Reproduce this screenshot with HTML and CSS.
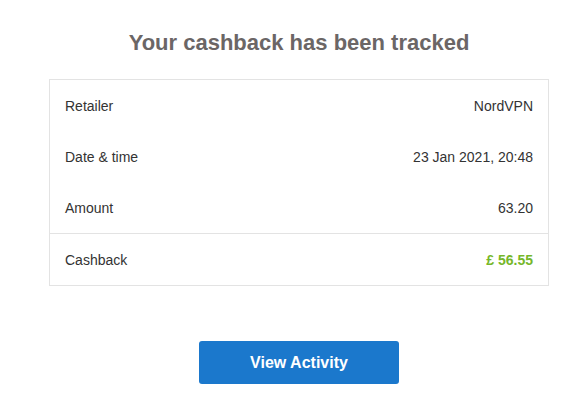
FILE: index.html
```html
<!DOCTYPE html>
<html>
<head>
<meta charset="utf-8">
<link rel="stylesheet" href="styles.css">
</head>
<body>
<div class="page">
  <h1 class="title">Your cashback has been tracked</h1>
  <div class="card">
    <div class="group">
      <div class="row"><span>Retailer</span><span>NordVPN</span></div>
      <div class="row"><span>Date &amp; time</span><span>23 Jan 2021, 20:48</span></div>
      <div class="row"><span>Amount</span><span>63.20</span></div>
    </div>
    <div class="group total">
      <div class="row"><span>Cashback</span><span class="cash">£ 56.55</span></div>
    </div>
  </div>
  <div class="actions">
    <a class="btn" href="#">View Activity</a>
  </div>
</div>
</body>
</html>
```
FILE: styles.css
```css
html, body { margin: 0; padding: 0; background: #fff; }
body { font-family: "Liberation Sans", Arial, sans-serif; color: #333; }
.page { width: 598px; padding-top: 31px; }
.title {
  margin: 0 0 24px;
  text-align: center;
  font-size: 22px;
  line-height: 24px;
  font-weight: bold;
  color: #6b6666;
}
.card {
  width: 498px;
  margin: 0 auto;
  border: 1px solid #e3e3e3;
}
.group.total { border-top: 1px solid #e3e3e3; }
.row {
  display: flex;
  justify-content: space-between;
  align-items: center;
  height: 51px;
  padding: 1px 15px 0;
  font-size: 14px;
  box-sizing: border-box;
}
.cash { color: #76b72a; font-weight: bold; }
.actions { display: flex; justify-content: center; padding-top: 55px; }
.btn {
  display: flex;
  align-items: center;
  justify-content: center;
  width: 200px;
  height: 43px;
  background: #1b78cc;
  border-radius: 3px;
  color: #fff;
  font-weight: bold;
  font-size: 16px;
  text-decoration: none;
}
```
